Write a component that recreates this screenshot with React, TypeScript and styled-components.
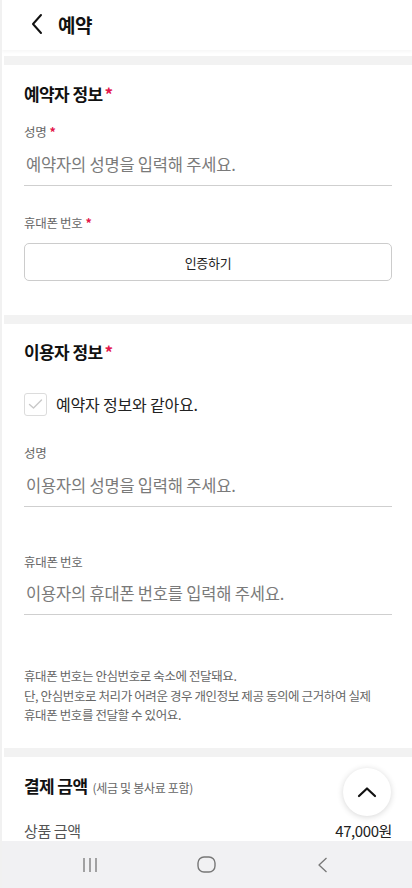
import React from 'react'
import styled, { createGlobalStyle } from 'styled-components'

const GlobalStyle = createGlobalStyle`
  html, body {
    margin: 0;
    padding: 0;
    background: #ffffff;
  }
  body {
    font-family: 'Noto Sans CJK KR', 'Noto Sans', sans-serif;
    color: #111;
  }
  * {
    box-sizing: border-box;
  }
`

const Page = styled.div`
  position: relative;
  width: 412px;
  height: 888px;
  display: flex;
  flex-direction: column;
  overflow: hidden;
  border-left: 2px solid #f1f1f1;
  background: #fff;
`

const Header = styled.header`
  display: flex;
  align-items: center;
  gap: 14px;
  height: 50px;
  padding: 0 0 2px 28px;
  box-shadow: 0 2px 3px rgba(0, 0, 0, 0.035);
`

const Title = styled.h1`
  margin: 0;
  font-size: 19px;
  font-weight: 700;
  letter-spacing: -0.5px;
  color: #111;
`

const Body = styled.main`
  flex: 1;
  overflow: hidden;
  padding-top: 6px;
`

const Band = styled.div`
  height: 9px;
  margin-left: 2px;
  background: #f2f2f2;
`

const Section = styled.section<{ $top?: number; $bottom?: number }>`
  display: flex;
  flex-direction: column;
  padding: ${(p) => p.$top ?? 17}px 20px ${(p) => p.$bottom ?? 34}px 22px;
`

const SectionTitle = styled.h2`
  margin: 0;
  display: flex;
  align-items: baseline;
  gap: 2px;
  font-size: 17px;
  line-height: 24px;
  font-weight: 700;
  letter-spacing: -0.6px;
  color: #111;
`

const Star = styled.span`
  color: #e3174c;
  font-weight: 700;
`

const Label = styled.label<{ $gap?: number }>`
  display: block;
  margin-top: ${(p) => p.$gap ?? 0}px;
  font-size: 12.5px;
  line-height: 18px;
  letter-spacing: -0.3px;
  color: #666;
  ${Star} {
    margin-left: 3px;
  }
`

const Field = styled.input<{ $gap?: number }>`
  display: block;
  width: 100%;
  height: 42px;
  margin-top: ${(p) => p.$gap ?? 3}px;
  padding: 0 0 2px 2px;
  border: none;
  border-bottom: 1px solid #cfcfcf;
  outline: none;
  background: transparent;
  font-family: inherit;
  font-size: 16.5px;
  letter-spacing: -0.2px;
  color: #222;
  &::placeholder {
    color: #7a7a7a;
  }
`

const OutlineButton = styled.button`
  display: block;
  width: 100%;
  height: 38px;
  margin-top: 11px;
  border: 1px solid #cccccc;
  border-radius: 5px;
  background: #fff;
  font-family: inherit;
  font-size: 13px;
  letter-spacing: -0.3px;
  color: #222;
`

const CheckRow = styled.label`
  display: flex;
  align-items: center;
  gap: 9px;
  margin-top: 28px;
  font-size: 16px;
  letter-spacing: -0.2px;
  color: #222;
`

const CheckBox = styled.span`
  display: flex;
  align-items: center;
  justify-content: center;
  width: 23px;
  height: 23px;
  border: 1px solid #dcdcdc;
  border-radius: 3px;
  background: #fff;
`

const Notice = styled.p`
  margin: 51px 0 0;
  font-size: 12.5px;
  line-height: 19.5px;
  letter-spacing: -0.4px;
  word-break: keep-all;
  color: #666;
`

const PayTitle = styled.h2`
  margin: 0;
  display: flex;
  align-items: baseline;
  gap: 5px;
  font-size: 17px;
  line-height: 24px;
  font-weight: 700;
  letter-spacing: -0.6px;
  color: #111;
  small {
    font-size: 12px;
    font-weight: 400;
    letter-spacing: -0.3px;
    color: #666;
  }
`

const PriceRow = styled.div`
  display: flex;
  justify-content: space-between;
  align-items: center;
  margin-top: 20px;
  font-size: 15px;
  letter-spacing: -0.4px;
  color: #555;
  strong {
    font-weight: 400;
    color: #222;
  }
`

const TopButton = styled.button`
  position: absolute;
  right: 21px;
  top: 768px;
  width: 48px;
  height: 48px;
  display: flex;
  align-items: center;
  justify-content: center;
  border: none;
  border-radius: 50%;
  background: #fff;
  box-shadow: 0 1px 6px rgba(0, 0, 0, 0.16);
`

const NavBar = styled.nav`
  flex: 0 0 47px;
  display: grid;
  grid-template-columns: repeat(3, 1fr);
  align-items: center;
  justify-items: center;
  margin-left: -2px;
  padding: 0 32px;
  background: #f1f1f3;
`

const NavIcon = styled.svg`
  display: block;
`

const Back = () => (
  <svg width="14" height="22" viewBox="0 0 14 22" fill="none">
    <path d="M11 2 L3 11 L11 20" stroke="#111" strokeWidth="2" strokeLinecap="round" strokeLinejoin="round" />
  </svg>
)

const Check = () => (
  <svg width="15" height="12" viewBox="0 0 15 12" fill="none">
    <path d="M1.5 6.5 L5.5 10 L13.5 2" stroke="#c8c8c8" strokeWidth="1.4" strokeLinecap="round" strokeLinejoin="round" />
  </svg>
)

export default function App() {
  return (
    <Page>
      <GlobalStyle />
      <Header>
        <Back />
        <Title>예약</Title>
      </Header>
      <Body>
        <Band />
        <Section>
          <SectionTitle>
            예약자 정보<Star>*</Star>
          </SectionTitle>
          <Label $gap={17}>
            성명<Star>*</Star>
          </Label>
          <Field placeholder="예약자의 성명을 입력해 주세요." />
          <Label $gap={28}>
            휴대폰 번호<Star>*</Star>
          </Label>
          <OutlineButton>인증하기</OutlineButton>
        </Section>
        <Band />
        <Section $top={16} $bottom={23}>
          <SectionTitle>
            이용자 정보<Star>*</Star>
          </SectionTitle>
          <CheckRow>
            <CheckBox>
              <Check />
            </CheckBox>
            예약자 정보와 같아요.
          </CheckRow>
          <Label $gap={28}>성명</Label>
          <Field placeholder="이용자의 성명을 입력해 주세요." />
          <Label $gap={46}>휴대폰 번호</Label>
          <Field $gap={2} placeholder="이용자의 휴대폰 번호를 입력해 주세요." />
          <Notice>
            휴대폰 번호는 안심번호로 숙소에 전달돼요.
            <br />
            단, 안심번호로 처리가 어려운 경우 개인정보 제공 동의에 근거하여 실제 휴대폰 번호를 전달할 수 있어요.
          </Notice>
        </Section>
        <Band />
        <Section $top={17}>
          <PayTitle>
            결제 금액 <small>(세금 및 봉사료 포함)</small>
          </PayTitle>
          <PriceRow>
            <span>상품 금액</span>
            <strong>47,000원</strong>
          </PriceRow>
        </Section>
      </Body>
      <TopButton aria-label="맨 위로">
        <svg width="20" height="12" viewBox="0 0 20 12" fill="none">
          <path d="M2 10 L10 2.5 L18 10" stroke="#111" strokeWidth="2.2" strokeLinecap="round" strokeLinejoin="round" />
        </svg>
      </TopButton>
      <NavBar>
        <NavIcon width="16" height="16" viewBox="0 0 16 16">
          <path d="M2 1 V15 M8 1 V15 M14 1 V15" stroke="#777" strokeWidth="1.3" />
        </NavIcon>
        <NavIcon width="19" height="17" viewBox="0 0 19 17" fill="none">
          <rect x="1" y="1" width="17" height="15" rx="6" stroke="#777" strokeWidth="1.4" />
        </NavIcon>
        <NavIcon width="11" height="16" viewBox="0 0 11 16" fill="none">
          <path d="M9.5 1 L2 8 L9.5 15" stroke="#777" strokeWidth="1.3" strokeLinejoin="round" />
        </NavIcon>
      </NavBar>
    </Page>
  )
}
